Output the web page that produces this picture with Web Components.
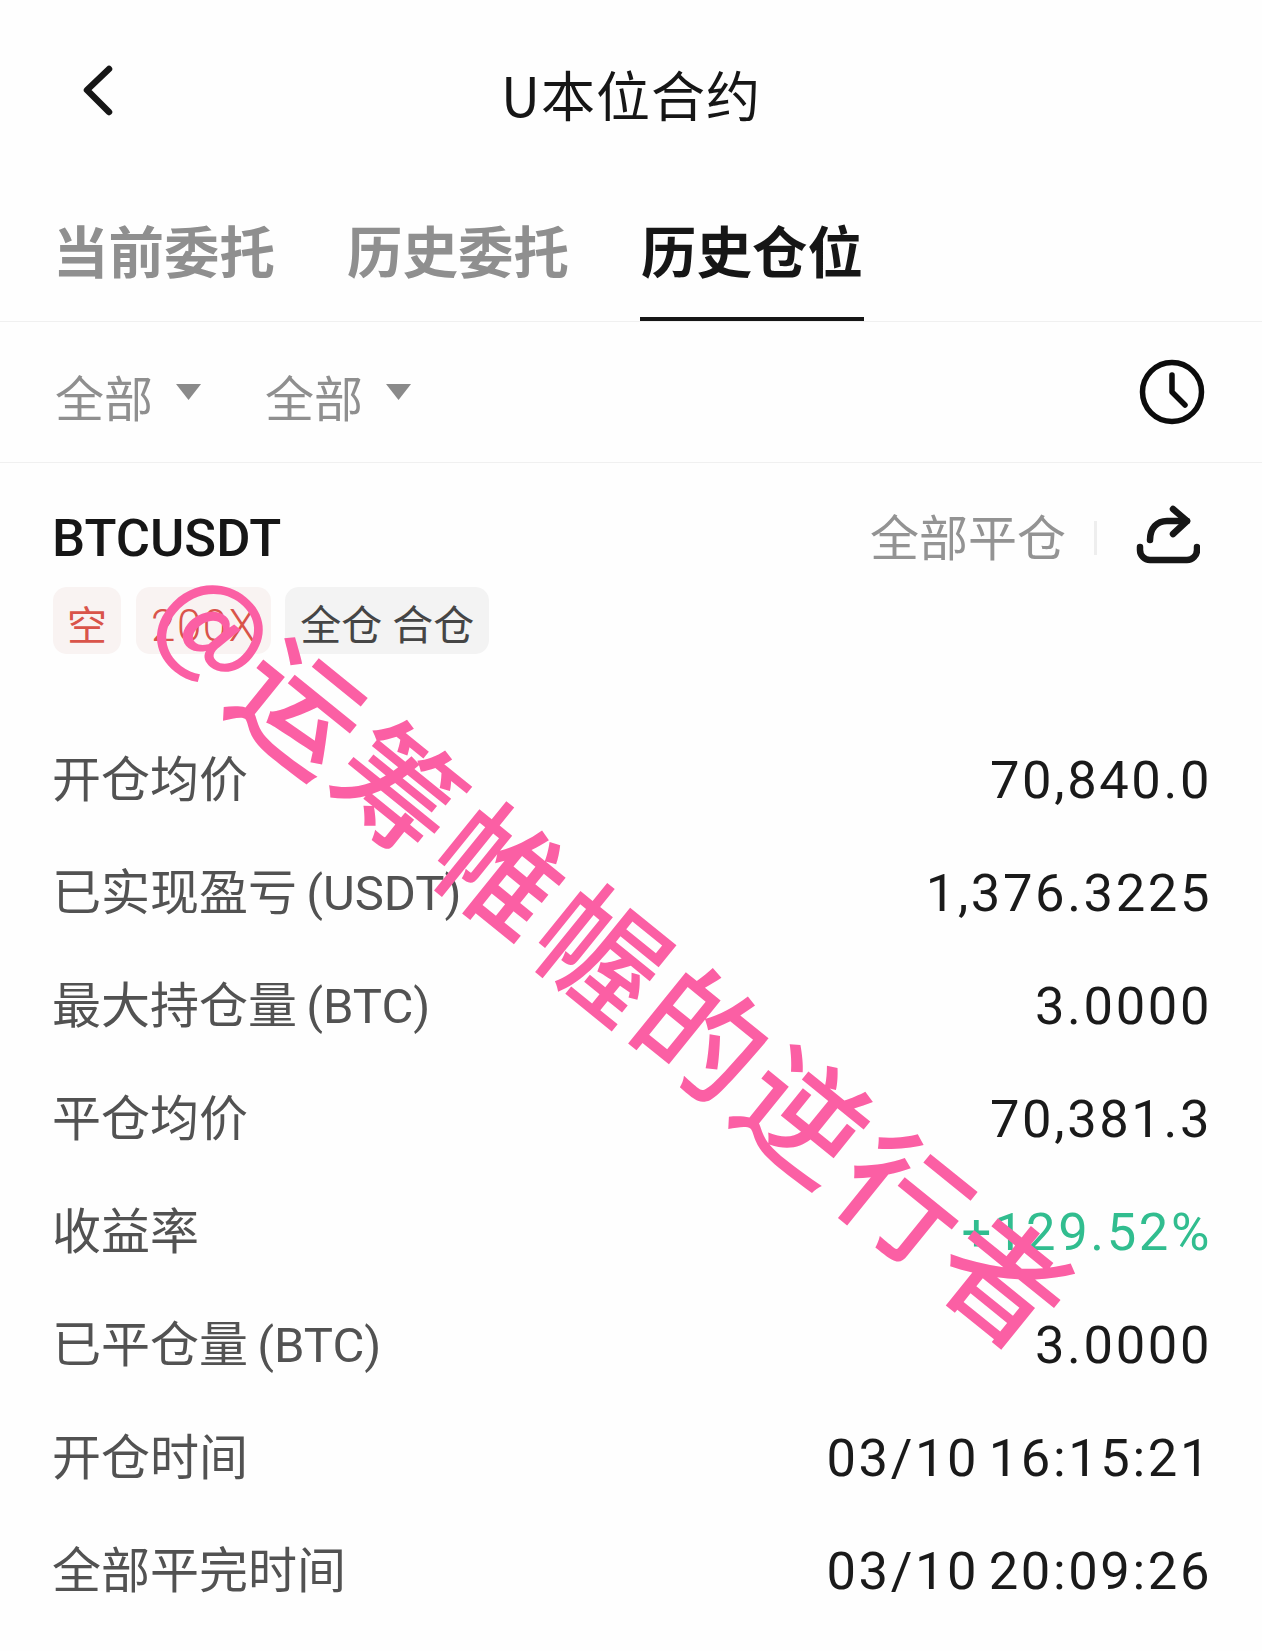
<!DOCTYPE html>
<html lang="zh">
<head>
<meta charset="utf-8">
<title>U本位合约</title>
<style>
  html, body { margin: 0; background: #fefefe; }
  body { height: 1651px; overflow: hidden; position: relative; font-family: "Noto Sans CJK SC", "Noto Sans", sans-serif; }
</style>
</head>
<body>
<app-header>U本位合约</app-header>
<tab-bar>
  <tab-item>当前委托</tab-item>
  <tab-item>历史委托</tab-item>
  <tab-item active>历史仓位</tab-item>
</tab-bar>
<filter-bar>
  <filter-pick>全部</filter-pick>
  <filter-pick>全部</filter-pick>
</filter-bar>
<position-card symbol="BTCUSDT">
  <tag-chip slot="tags" kind="red">空</tag-chip>
  <tag-chip slot="tags" kind="red" wide>200X</tag-chip>
  <tag-chip slot="tags">全仓 合仓</tag-chip>
  <stat-row label="开仓均价" value="70,840.0"></stat-row>
  <stat-row label="已实现盈亏 (USDT)" value="1,376.3225"></stat-row>
  <stat-row label="最大持仓量 (BTC)" value="3.0000"></stat-row>
  <stat-row label="平仓均价" value="70,381.3"></stat-row>
  <stat-row label="收益率" value="+129.52%" tone="up"></stat-row>
  <stat-row label="已平仓量 (BTC)" value="3.0000"></stat-row>
  <stat-row label="开仓时间" value="03/10 16:15:21"></stat-row>
  <stat-row label="全部平完时间" value="03/10 20:09:26"></stat-row>
</position-card>
<water-mark><span style="display:inline-block;font-size:112px;letter-spacing:0;transform:translate(1px,-17px)">@</span>运筹帷幄的逆行者</water-mark>

<script>
const CJK = `"Noto Sans CJK SC", "Noto Sans", sans-serif`;

class AppHeader extends HTMLElement {
  constructor() {
    super();
    this.attachShadow({ mode: "open" });
    this.shadowRoot.innerHTML = `
      <style>
        :host { display: block; position: relative; height: 194px; font-family: ${CJK}; }
        .bar { height: 100%; display: flex; align-items: center; justify-content: center; padding-bottom: 6px; box-sizing: border-box; }
        .title { font-size: 54px; letter-spacing: 1px; color: #161616; line-height: 1; }
        svg { position: absolute; left: 78px; top: 60px; }
      </style>
      <svg width="40" height="60" viewBox="0 0 40 60" fill="none">
        <path d="M31 9 L9 30 L31 52" stroke="#161616" stroke-width="6.5" stroke-linecap="round" stroke-linejoin="round"/>
      </svg>
      <div class="bar"><span class="title"><slot></slot></span></div>`;
  }
}

class TabBar extends HTMLElement {
  constructor() {
    super();
    this.attachShadow({ mode: "open" });
    this.shadowRoot.innerHTML = `
      <style>
        :host { display: flex; gap: 70px; height: 127px; padding-left: 52px; border-bottom: 1px solid #f0f0f0; }
      </style>
      <slot></slot>`;
  }
}

class TabItem extends HTMLElement {
  constructor() {
    super();
    this.attachShadow({ mode: "open" });
    this.shadowRoot.innerHTML = `
      <style>
        :host { display: flex; width: 224px; justify-content: center; box-sizing: border-box; padding-top: 25px; height: 127px;
          font: 700 55.5px/1.1 ${CJK}; color: #8f8f8f; border-bottom: 4px solid transparent; white-space: nowrap; }
        :host([active]) { color: #161616; border-bottom-color: #161616; }
      </style>
      <slot></slot>`;
  }
}

class FilterBar extends HTMLElement {
  constructor() {
    super();
    this.attachShadow({ mode: "open" });
    this.shadowRoot.innerHTML = `
      <style>
        :host { display: flex; align-items: center; padding: 6px 56px 0 55px; box-sizing: border-box; height: 141px; border-bottom: 1px solid #f0f0f0; gap: 63px; }
        .clock { margin-left: auto; margin-top: -6px; margin-right: -1px; display: block; }
      </style>
      <slot></slot>
      <svg class="clock" width="70" height="70" viewBox="0 0 70 70" fill="none" stroke="#0c0c0c" stroke-width="5.5" stroke-linecap="round" stroke-linejoin="round">
        <circle cx="35" cy="35" r="29.5"/>
        <path d="M35 18 V35 L48 48"/>
      </svg>`;
  }
}

class FilterPick extends HTMLElement {
  constructor() {
    super();
    this.attachShadow({ mode: "open" });
    this.shadowRoot.innerHTML = `
      <style>
        :host { display: flex; align-items: center; gap: 22px; font: 400 49px/1 ${CJK}; color: #8f8f8f; }
        svg { margin-top: -7px; }
      </style>
      <slot></slot>
      <svg width="27" height="16" viewBox="0 0 27 16"><path d="M1 0 H26 L13.5 16 Z" fill="#8a8a8a"/></svg>`;
  }
}

class PositionCard extends HTMLElement {
  constructor() {
    super();
    this.attachShadow({ mode: "open" });
    this.shadowRoot.innerHTML = `
      <style>
        :host { display: block; padding: 40px 53px 0 54px; font-family: ${CJK}; }
        .head { display: flex; align-items: center; height: 70px; }
        .symbol { font: 500 52.5px/1 Roboto, "Noto Sans", sans-serif; color: #161616; margin-left: -2px; }
        .side { margin-left: auto; display: flex; align-items: center; font-size: 49px; line-height: 1; color: #939393; }
        .label { margin-top: -8px; }
        .sep { width: 3px; height: 34px; background: #eeeeee; margin: 0 33px 0 28px; }
        .share { display: block; margin-right: 9px; margin-top: -6px; }
        .tags { display: flex; gap: 14px; margin-top: 14px; margin-left: -1px; }
        .rows { display: block; margin-top: 70px; }
      </style>
      <div class="head">
        <span class="symbol"></span>
        <span class="side"><span class="label">全部平仓</span><i class="sep"></i>
          <svg class="share" width="70" height="66" viewBox="0 0 70 66" fill="none" stroke="#161616" stroke-width="6.5" stroke-linecap="round" stroke-linejoin="round">
            <path d="M10 45 V48 A10 10 0 0 0 20 58 H57 A10 10 0 0 0 67 48 V45"/>
            <path d="M20 38 C20 26 27 19 37 19 H57"/>
            <path d="M43 7 L57 19 L43 32"/>
          </svg>
        </span>
      </div>
      <div class="tags"><slot name="tags"></slot></div>
      <div class="rows"><slot></slot></div>`;
  }
  connectedCallback() {
    this.shadowRoot.querySelector(".symbol").textContent = this.getAttribute("symbol");
  }
}

class TagChip extends HTMLElement {
  constructor() {
    super();
    this.attachShadow({ mode: "open" });
    this.shadowRoot.innerHTML = `
      <style>
        :host { display: flex; align-items: center; box-sizing: border-box; height: 67px; padding: 12px 15px 0; border-radius: 14px;
          font: 400 41px/1 Roboto, ${CJK}; background: #f3f3f3; color: #454545; }
        :host([kind="red"]) { background: #f9f3f2; color: #d9544a; padding: 12px 14px 0; font-size: 40px; }
        :host([wide]) { font-size: 44px; font-weight: 300; letter-spacing: 1.5px; padding: 10px 14px 0 15px; margin-left: 1px; }
      </style>
      <slot></slot>`;
  }
}

class StatRow extends HTMLElement {
  static get observedAttributes() {
    return ["label", "value"];
  }

  constructor() {
    super();
    this.attachShadow({ mode: "open" });
  }

  Render() {
    return `
      <style>
        :host { display: flex; justify-content: space-between; align-items: center; height: 113px; }
        .label { font: 400 49px/1 Roboto, ${CJK}; color: #525252; margin-left: -2px; word-spacing: -3px; }
        .value { font: 400 52.5px/1 Roboto, sans-serif; letter-spacing: 2.6px; word-spacing: -6px; margin-right: -3px; color: #1a1a1a; }
        :host([tone="up"]) .value { color: #31bd8f; }
      </style>
      <span class="label">${this.getAttribute("label")}</span>
      <span class="value">${this.getAttribute("value")}</span>`;
  }

  connectedCallback() {
    this.shadowRoot.innerHTML = this.Render();
  }

  attributeChangedCallback(name, oldVal, newVal) {
    if (oldVal !== newVal) {
      this.shadowRoot.innerHTML = this.Render();
    }
  }
}

class WaterMark extends HTMLElement {
  constructor() {
    super();
    this.attachShadow({ mode: "open" });
    this.shadowRoot.innerHTML = `
      <style>
        :host { position: absolute; left: 170px; top: 532px; display: block; white-space: nowrap; pointer-events: none;
          font: 500 124px/1 ${CJK}; letter-spacing: 6px; color: #fb5fa4;
          transform: rotate(39deg); transform-origin: 0 50%; }
      </style>
      <slot></slot>`;
  }
}

customElements.define("app-header", AppHeader);
customElements.define("tab-bar", TabBar);
customElements.define("tab-item", TabItem);
customElements.define("filter-bar", FilterBar);
customElements.define("filter-pick", FilterPick);
customElements.define("position-card", PositionCard);
customElements.define("tag-chip", TagChip);
customElements.define("stat-row", StatRow);
customElements.define("water-mark", WaterMark);
</script>
</body>
</html>
